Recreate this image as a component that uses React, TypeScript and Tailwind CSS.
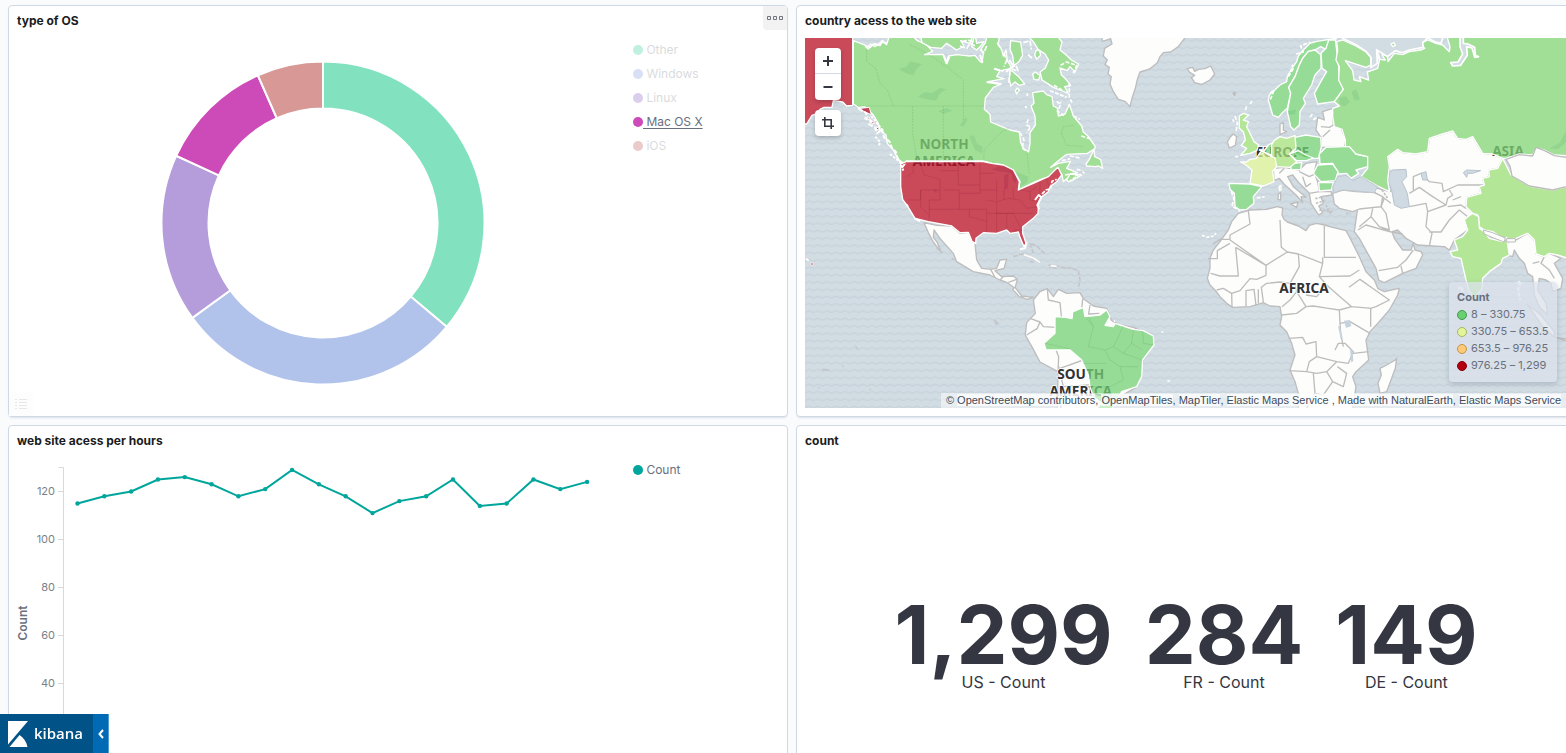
import React from "react";

const slices = [
  { name: "Other", from: 0, to: 130, color: "#82e2c0" },
  { name: "Windows", from: 130, to: 234, color: "#b1c2eb" },
  { name: "Linux", from: 234, to: 294.6, color: "#b59ddb" },
  { name: "Mac OS X", from: 294.6, to: 336.2, color: "#cc4bb8" },
  { name: "iOS", from: 336.2, to: 360, color: "#d89896" },
];

const hourly = [115, 118, 120, 125, 126, 123, 118, 121, 129, 123, 118, 111, 116, 118, 125, 114, 115, 125, 121, 124];

const metrics = [
  { value: "1,299", label: "US - Count" },
  { value: "284", label: "FR - Count" },
  { value: "149", label: "DE - Count" },
];

const ranges = [
  { label: "8 – 330.75", fill: "#69cf70", stroke: "#3f9c48" },
  { label: "330.75 – 653.5", fill: "#e3f49a", stroke: "#a5b763" },
  { label: "653.5 – 976.25", fill: "#fdcb77", stroke: "#c49246" },
  { label: "976.25 – 1,299", fill: "#b5000f", stroke: "#86000b" },
];

function polar(r: number, deg: number) {
  const a = ((deg - 90) * Math.PI) / 180;
  return `${(r * Math.cos(a)).toFixed(2)} ${(r * Math.sin(a)).toFixed(2)}`;
}

function arc(from: number, to: number) {
  const big = to - from > 180 ? 1 : 0;
  return `M${polar(161.5, from)}A161.5 161.5 0 ${big} 1 ${polar(161.5, to)}L${polar(114.5, to)}A114.5 114.5 0 ${big} 0 ${polar(114.5, from)}Z`;
}

function Panel({ title, children, menu }: { title: string; children: React.ReactNode; menu?: boolean }) {
  return (
    <section className="relative flex h-[412px] flex-col rounded border border-[#cfd9e6] bg-white px-2 pb-2 shadow-[0_2px_2px_-1px_rgba(152,162,179,0.3)]">
      <h2 className="mb-0.5 h-[30px] text-xs leading-[30px] font-bold text-[#1a1c21]">{title}</h2>
      {menu && (
        <button
          aria-label="Panel options"
          className="absolute top-0 right-0 flex h-6 w-6 items-center justify-center rounded-bl bg-[#f2f2f3]"
        >
          <svg width="16" height="4" viewBox="0 0 16 4" fill="none" stroke="#70747d" strokeWidth="1">
            <path d="M.5.5h3v3h-3zM6.5.5h3v3h-3zM12.5.5h3v3h-3z" />
          </svg>
        </button>
      )}
      {children}
    </section>
  );
}

function DonutPanel() {
  return (
    <Panel title="type of OS" menu>
      <div className="flex min-h-0 flex-1">
        <svg className="h-full min-w-0 flex-1" viewBox="-185 -185 370 370" role="img" aria-label="type of OS">
          {slices.map((s) => (
            <path key={s.name} d={arc(s.from, s.to)} fill={s.color} stroke="#fff" strokeWidth="2" />
          ))}
        </svg>
        <ul className="w-[150px] pl-1 text-xs leading-[23px]">
          {slices.map((s) => {
            const on = s.name === "Mac OS X";
            return (
              <li key={s.name} className="h-6">
                <button className="flex items-center text-[#69707d]">
                  <svg width="10" height="10" viewBox="0 0 10 10">
                    <circle cx="5" cy="5" r="5" fill={s.color} fillOpacity={on ? 1 : 0.5} />
                  </svg>
                  <span className={on ? "whitespace-pre underline underline-offset-2" : "whitespace-pre opacity-25"}>
                    {" " + s.name}
                  </span>
                </button>
              </li>
            );
          })}
        </ul>
      </div>
      <button aria-label="Toggle legend" className="absolute bottom-0 left-0 flex h-6 w-6 items-center justify-center rounded-tr bg-[#fdfdfd]">
        <svg width="12" height="10" viewBox="0 0 12 10" stroke="#e6e7e9" strokeWidth="1">
          <path d="M0 .5h2M4 .5h8M0 3.5h2M4 3.5h8M0 6.5h2M4 6.5h8M0 9.5h2M4 9.5h8" />
        </svg>
      </button>
    </Panel>
  );
}

function LinePanel() {
  const pts = hourly.map((v, i) => [60.5 + i * 26.82, 33.5 + (120 - v) * 2.4]);
  return (
    <Panel title="web site acess per hours">
      <div className="flex min-h-0 flex-1">
        <svg
          className="h-full min-w-0 flex-1 font-['Inter',sans-serif]"
          viewBox="0 0 612 370"
          preserveAspectRatio="xMinYMin meet"
          role="img"
          aria-label="Count per hour"
        >
          <path d="M41.500 9.500h5V346M41 33.500h5M41 81.500h5M41 129.500h5M41 177.500h5M41 225.500h5" fill="none" stroke="#d9d9d9" />
          {[120, 100, 80, 60, 40].map((v, i) => (
            <text key={v} x="38" y={37 + i * 48} textAnchor="end" fontSize="11" fill="#7b7f88">
              {v}
            </text>
          ))}
          <text transform="translate(10 165) rotate(-90)" textAnchor="middle" fontSize="12" fontWeight="600" fill="#69707d">
            Count
          </text>
          <polyline points={pts.map((p) => p.join(",")).join(" ")} fill="none" stroke="#00a69b" strokeWidth="2" />
          {pts.map((p, i) => (
            <circle key={i} cx={p[0]} cy={p[1]} r="2.2" fill="#00a69b" />
          ))}
        </svg>
        <ul className="w-[150px] pl-1 text-xs leading-[23px]">
          <li className="h-6">
            <button className="flex items-center text-[#69707d]">
              <svg width="10" height="10" viewBox="0 0 10 10">
                <circle cx="5" cy="5" r="5" fill="#00a69b" />
              </svg>
              <span className="whitespace-pre">{" Count"}</span>
            </button>
          </li>
        </ul>
      </div>
    </Panel>
  );
}

const LAND = { fill: "#fdfdfc", stroke: "#bdbdbd", strokeWidth: 4, strokeLinejoin: "round" as const };

// Drawn twice: once as plain land under the labels, once as the translucent data layer above them.
function CountedCountries({ plain }: { plain?: boolean }) {
  const f = (color: string) => (plain ? "#fdfdfc" : color);
  return (
    <g stroke={plain ? "none" : "#fff"} strokeWidth={4} strokeLinejoin="round" fillOpacity={plain ? 1 : 0.75}>
      <g fill={f("#81d474")}>
        <path d="M160 122L182 130L205 140L212 132L225 140L240 128L262 128L270 100H330L352 122L378 132L398 154L374 164L430 163L438 188L446 168L470 164L492 166L508 168L525 166L538 182L546 188L550 162L544 146L556 128L562 104L598 112L594 134L604 146L610 168L618 150L622 182L636 205L600 212L590 230L612 236L565 245L604 252L580 262L556 294L553 328L570 343L572 366L605 380L630 390L658 396L662 428L672 448L686 455L690 430L690 398L706 375L705 348L693 318L702 310L698 278L730 273L740 284L756 290L760 318L772 324L775 348L795 342L808 313L820 348L845 378L850 396L864 408L885 438V446L862 460L800 463L775 482L752 502L775 490L812 484L800 505L832 518L812 526L790 545L785 522L770 505L755 530L730 535L700 548L655 570L660 545L640 510L610 495L575 490L550 483H318L312 500L292 472L280 450L262 430L258 405L240 390L235 370L220 345L195 320L175 322L160 312Z" />
        <path d="M360 100L366 128L392 142L425 145L440 130L470 150L492 138L482 122L510 130L520 100Z" />
        <path d="M525 100L530 130L552 125L540 140L530 150L515 140L520 120Z" />
        <g transform="translate(480 108)">
          <path d="M150 102L160 108L178 124L194 144L178 148L165 138L152 150L148 128ZM152 14L182 18L188 58L176 78L162 88L158 60L150 40ZM228 44L238 42L242 58L230 70L224 56ZM166 164L172 156L178 162L170 174ZM218 114L226 108L240 118L236 132L222 130Z" />
          <path d="M198 -8L222 20L234 40L255 54L266 72L256 96L240 108L246 132L262 142L280 154L300 162L325 172L314 152L332 148L318 130L304 116L300 96L322 104L330 92L345 108L356 84L334 72L318 56L300 42L306 18L286 -8Z" />
        </g>
        <path d="M858 492L868 478L882 448L884 470L902 478L908 505L896 498L886 500L860 498ZM800 540L810 522L845 525L820 540L806 545Z" />
      </g>
      <g fill={f("#b80e24")}>
        <path d="M0 100H158V316L140 318L128 306L100 302L96 322L72 322L60 328L48 342L36 346L20 372H0Z" />
        <path d="M318 485H550L575 490L610 495L640 510L658 545L655 570L700 550L745 530L765 510L774 502L785 525L770 545L750 560L745 575L725 590L716 608L714 640L700 655L668 680L668 700L678 730L672 740L660 712L655 696L630 700L620 690L590 700L550 698L528 715L527 730L516 724L505 697L480 698L455 678L385 665L345 655L325 622L308 598L302 560V492Z" />
        <path d="M34 788l6 2l-2 6l-6 -2z" strokeWidth="2" />
        {!plain && <path d="M174 326L208 322L214 344L200 338ZM202 350l8 4l-4 6zM216 362l8 8l-8 2zM228 380l10 6l-8 4zM244 384l6 6l-8 2z" strokeWidth="3" />}
      </g>
      <g transform="translate(750 90)" fill={f("#74d074")}>
        <path d="M655 210L658 195L672 182L690 165L710 155L712 140L724 118L740 95L745 78L760 60L780 40L800 34L858 25L856 34L836 32L828 58L812 50L795 60L775 64L758 85L748 105L735 140L716 172L722 190L712 235L700 245L685 262L668 255Z" />
        <path d="M712 245L722 190L716 172L735 140L748 105L758 85L775 64L795 60L813 75V115L795 135L785 165L760 205L766 220L750 245L748 285L732 300L722 290Z" />
        <path d="M537 460L600 462L635 470L610 500L612 520L590 538L570 540L555 530L553 490L540 478Z" />
        <path d="M735 322L768 315L812 322L814 350L806 385L768 385L735 372Z" />
        <path d="M718 372L745 362L768 375L790 384L770 392L740 392ZM720 402L755 397L752 418L724 420ZM640 366L655 345L672 336L664 375Z" />
      </g>
      <g transform="translate(1518 90)" fill={f("#74d074")}>
        <path d="M45 70L60 55L68 30L88 30L92 60L98 110L100 150L112 178L85 215L35 222L25 190L50 145L62 125L48 115Z" />
        <path d="M40 372L60 352L115 350L130 348L150 372L185 380V410L150 420L158 430L135 445L122 430L98 432L80 400L42 402Z" />
        <path d="M35 405L80 402L96 425L88 452L45 455L22 430ZM38 458L82 458L76 480L40 483Z" />
      </g>
      <path
        transform="translate(1518 90)"
        fill={f("#81d474")}
        d="M80 235L100 228L85 215L112 178L98 150L100 110L90 90L95 60L92 35L110 30L150 48L180 66L194 82L194 105L180 112L118 92L140 122L144 150L165 155L160 140L188 150L184 126L215 115L220 92L214 62L222 88L238 90L228 75L244 74L246 95L265 70L290 74L310 65L345 60L356 55L345 40L365 30L390 40L410 45L430 65L432 50L420 10H800V378L745 375L715 360L690 355L680 375L640 372L600 385L590 385L560 372L530 370L500 320L480 328L455 325L440 303L400 315L370 325L365 365L330 372L290 368L275 358L245 380L250 410L245 450L250 485L215 468L165 440L185 415V380L150 372L130 350L118 350V330L108 298L85 290L80 260Z"
      />
      <g transform="translate(750 600)" fill={f("#74d074")}>
        <path d="M15 350L48 352L66 356L68 336L100 322L105 350L150 345L170 330L180 350L165 376L190 380L195 370L220 378L250 388L280 392L310 408L312 435L278 480L275 530L260 560L215 575L200 600L180 640H125L155 610L130 590L120 560L115 525L95 480L60 450H-12L-18 430L15 400Z" />
      </g>
      <g fill={f("#99dd75")}>
        <path transform="translate(750 90)" d="M568 258L580 250L596 255L580 270L595 275L590 290L605 320L612 335L626 345L620 362L600 370L572 376L590 355L574 346L586 330L580 305L568 295Z" />
        <path transform="translate(1518 90)" d="M590 385L615 435L670 468L740 480L800 465V690L755 675L730 670L715 680L690 672L685 630L665 610L630 625L600 632L560 605L535 600L520 590L515 555L500 550L480 530L482 502L525 490L520 470L535 465L530 445L550 440L548 420L575 415Z" />
        <path transform="translate(1518 600)" d="M485 50L500 40L518 50L520 85L535 95L550 115L590 125L602 112L606 140L610 165L590 175L585 190L550 215L530 235L528 265L510 290H502L490 275L480 240L465 175L440 170L432 155L455 150L445 120L470 110L485 90L475 60Z" />
      </g>
      <path transform="translate(750 90)" fill={f("#a6e07c")} d="M665 345L672 332L690 320L710 325L735 316L738 355L718 372L740 395L720 412L680 410L665 385Z" />
      <path transform="translate(750 90)" fill={f("#d6ee92")} d="M572 396L590 396L600 388L618 386L635 362L675 385L680 410L668 424L672 455L640 468L600 460L606 420L592 408ZM687 470l6-4v14l-4 2z" />
    </g>
  );
}

function WorldMap() {
  return (
    <svg className="block h-full w-full" viewBox="15 114 2289 1110" preserveAspectRatio="xMinYMid slice" role="img" aria-label="World map">
      <defs>
        <pattern id="waves" width="27" height="22" patternUnits="userSpaceOnUse">
          <rect width="27" height="22" fill="#d2dce3" />
          <path d="M0 9C6 9 8 14 13.500 14S21 9 27 9" fill="none" stroke="#c8d3db" strokeWidth="4" />
        </pattern>
      </defs>
      <rect x="0" y="100" width="2320" height="1140" fill="url(#waves)" />

      {/* Greenland, Iceland, Ireland and Denmark */}
      <g transform="translate(750 90)" {...LAND}>
        <path d="M150 10L158 34L182 26L186 42L164 55L160 78L172 90L165 104L178 112L174 132L184 140L180 162L190 185L205 208L225 214L240 230L246 205L256 175L262 148L270 126L290 120L300 116L322 98L330 80L340 68L362 66L385 50L415 10Z" />
        <path d="M412 116L428 112L434 124L445 118L465 116L482 108L494 132L480 150L456 163L434 158L424 142L434 136L418 126Z" />
        <path d="M540 322L550 312L560 320L556 346L538 354L532 336Z" />
        <path d="M549 190L556 186L554 196Z" />
        <path d="M690 282L700 278L700 300L710 305L690 314Z" />
      </g>

      {/* Africa */}
      <g transform="translate(750 600)" {...LAND}>
        <path d="M565 40L600 30L650 28L682 20L698 24L696 45L702 58L712 66L745 78L768 92L778 76L800 70L823 75L848 82L888 92L898 110L928 170L948 215L973 240L984 266L1003 275L1048 265L1043 285L1018 330L983 370L960 395L948 420L956 480L918 515L908 530L918 560L906 640H746L745 580L735 545L720 510L735 465L725 430L710 395L690 375L695 350L690 320L660 318L640 308L600 320L548 322L530 310L510 290L495 270L480 255L472 235L480 205L480 175L490 150L510 125L535 90L545 65Z" />
        <path fill="none" strokeWidth="4" d="M595 32L600 72L540 105V120L648 196L712 156L694 142L690 60M488 132L512 118H540M474 176H502V152L540 130M557 142L648 196V226L620 238L600 236L570 272L545 280L546 320M557 142L565 228H510L482 220M712 156L745 162L748 200L720 250L690 246L650 250L634 262L640 306M745 162L818 190V172M823 78V172H918M818 190L808 230L830 255L800 290L768 285M808 230L900 228L928 210M588 320V272L612 268L618 316M625 310V268M500 270L520 265L545 280M696 320L720 300L740 275L768 320L740 340L695 345M740 275L735 250M768 320L790 318L835 325L868 330L905 320L965 325M830 255L870 290L905 320M897 262L930 238L975 270L1018 300L978 320L962 325V380M868 330L870 370L900 365L960 400M716 415L758 412L768 432L798 425L800 470L778 485L770 515L718 512M800 470L860 485L895 490L910 455L885 430L865 430L855 450M870 370L872 400L880 440M910 460L956 455M770 515L800 520L830 515L860 485M830 515L848 545L880 560L890 520L862 500M790 520L795 580L770 624M848 545L820 585L795 580" />
        <path d="M1036 480L1040 475L1036 505L1010 575L990 580L984 550L994 525L990 505L1010 495Z" />
        <path fill="#c6d3dd" stroke="none" d="M882 362l18 -2l4 18l-16 6zM864 378l6 2l8 34l-6 2zM900 450l8 2l2 30l-6 6z" />
      </g>

      {/* Asia, the Middle East and southern Europe */}
      <g transform="translate(1518 90)" {...LAND}>
        <path d="M245 380L275 358L290 368L330 372L365 365L370 325L400 315L440 303L455 325L480 328L500 320L530 370L560 372L590 385L575 415L548 420L550 440L530 445L535 465L520 470L525 490L482 502L480 530L500 550L485 600L445 630L430 660L415 650L380 648L335 645L300 625L275 600L258 605L265 625L290 660L315 660L322 640L327 660L345 665L350 675L330 715L290 730L235 758L218 750L210 715L185 670L160 625L145 605L150 570L155 535L225 530L235 505L210 490L180 465L250 485L260 482Z" />
        <path d="M80 490L110 480L150 485L205 488L230 500L225 530L160 537L140 545L100 535L85 522Z" />
        <path d="M80 235L50 245L55 270L35 262L30 300L45 322V352L115 352L120 330L105 295L82 285Z" />
        <path d="M-98 415L-65 412L-20 420L0 400L32 395L25 428L35 455L40 485L75 485L78 495L45 500L52 520L38 528L50 548L38 555L15 520L10 490L-20 460L-40 435L-55 440L-38 470L0 502L-15 500L-10 518L-30 495L-66 462L-80 445L-96 452Z" />
        <path d="M-46 522L-24 516L-28 532ZM-83 492L-76 487V510L-84 508Z" />
        <path d="M605 635L630 630L665 610L688 635L690 672L715 680L730 670L765 685L745 700L770 745L765 775L740 785L735 760L720 750L700 745L695 780L720 820L725 855L700 830L685 795L680 740L665 730L655 700L640 685L625 660L620 680L602 675Z" />
        <path d="M665 825L700 850L745 905V922L710 890ZM748 922L800 930V940Z" />
        <path fill="none" strokeWidth="4" d="M45 290L70 292L82 285M50 320L72 300M-20 425L10 440L30 430M-10 440L0 470L15 460M10 490L40 485M-80 430L-65 415" />
        <path fill="none" strokeWidth="4" d="M225 530L240 550L250 600L220 590L195 560L200 535M160 590L195 560M220 590L255 606M235 505L255 520M310 530L360 520L365 545L360 590L378 610L370 648M322 480V440L345 430L370 455L408 460L412 485L455 465L535 465M310 490L340 472L380 500L420 525L365 545M370 606H405L430 570L460 540L485 560M420 525L425 505L440 495L430 480M425 530L465 525L480 535M465 500L440 510M156 600L180 585L250 605L290 612M218 722L275 712L300 690L322 660M290 730L285 708M715 680L705 700L730 720L745 745M680 700L700 695" />
      </g>
      <g transform="translate(1518 90)" fill="#d0dae2" stroke="#b8c3cd" strokeWidth="3" strokeLinejoin="round">
        <path d="M250 430L258 420L300 418L302 440L288 455L304 490L310 530L285 535L265 525L258 485L248 455Z" />
        <path d="M472 428L482 420L524 422L500 430L485 430L482 442ZM345 430L360 425L364 450L350 450Z" />
      </g>

      {/* Mexico, Central America and South America */}
      <g transform="translate(0 600)" {...LAND}>
        <path d="M372 68L410 76L455 78L480 100L505 97L525 130L530 180L545 205L572 208L590 205L600 180L620 178L612 205L585 212L605 230L640 228L652 238L645 265L620 247L600 240L570 225L520 215L470 185L460 160L420 115L402 90L400 112L412 128L424 158L400 126L386 100Z" />
        <path d="M645 262L665 288L700 292L682 298L658 290L638 268Z" />
        <path d="M700 300L720 275L742 266L760 290L775 268L800 280L840 278L850 296L880 318L920 325L935 362L960 375L1000 382L1060 408L1062 432L1030 480L1020 535L1008 562L960 590L930 640H772L774 515L720 486L700 448L676 405L680 368L706 340Z" />
        <path fill="none" strokeWidth="4" d="M742 266L745 300L780 308L784 348L768 382L730 380L720 366L692 356M720 366L712 385L680 405M768 450L776 470L774 515M848 296L845 330M870 315L866 342L898 340M776 500L790 560L780 640M850 480L780 505M790 560L868 555M572 208L585 232M610 230L600 240M625 247L650 238" />
        <path fill="none" strokeWidth="5" stroke="#c4c7ca" d="M640 170L668 162L700 175L722 188M745 195L775 198L765 204L748 202M700 160L690 130L710 138L735 162M690 185L702 186M782 202L810 204L835 212L840 240L835 262M410 145L428 158M455 175L462 180" strokeDasharray="14 4" />
        <path fill="#c4c7ca" stroke="none" d="M580 358l10 4l8 10l-12 2zM162 432l6 6l8 10l-4 2zM64 506h8l14 2l2 6l-20 -2zM126 496h5v4h-5zM208 566h5v4h-5zM54 562h5v3h-5zM36 400h5v3h-5z" />
        <path fill="none" stroke="#fdfdfc" strokeWidth="5" d="M672 164L700 174L720 187M752 197L770 199" />
      </g>

      <CountedCountries plain />

      {/* Lakes */}
      <g fill="#c6d3dd">
        <path d="M296 206L320 200L330 184L366 192L350 206L340 226L318 220ZM352 290L375 276L395 280L420 264L440 268L420 280L408 302L380 298ZM414 334L440 324L458 332L430 342ZM480 376L498 350L502 360L490 380ZM508 410L522 405L530 430L548 440L546 460L525 450ZM640 515L660 520L685 530L682 548L660 560Z" />
        <path d="M575 508L600 498L640 508L645 525L625 518L595 514ZM612 525L626 520L624 565L612 570ZM634 518L655 530L646 550L638 540ZM654 568L690 555L680 562ZM398 570L410 568V580Z" />
        <path transform="translate(1518 90)" d="M98 205L120 198L132 215L115 230L102 222ZM136 185L150 178L162 208L146 212ZM730 355L760 340L782 300V335L755 358Z" />
        <path transform="translate(750 90)" d="M712 245L738 238L735 252L714 255Z" />
      </g>

      {/* Continent labels */}
      <g fontFamily="'Noto Sans', sans-serif" fontWeight="700" fontSize="41" fill="#303236" stroke="#fff" strokeWidth="5" paintOrder="stroke" textAnchor="middle" strokeLinejoin="round">
        <text x="432" y="446">NORTH</text>
        <text x="432" y="497">AMERICA</text>
        <text x="1447" y="471">EUROPE</text>
        <text x="2124" y="468">ASIA</text>
        <text x="1512" y="879">AFRICA</text>
        <text x="842" y="1137">SOUTH</text>
        <text x="842" y="1187">AMERICA</text>
      </g>

      <CountedCountries />

      <g transform="translate(1518 90)">
        <path {...LAND} d="M600 388L640 374L680 378L690 352L716 362L745 377L800 385V465L740 480L670 468L618 438L612 408Z" />
        <path fill="#fdfdfc" stroke="#bdbdbd" strokeWidth="3" d="M532 600L560 608L598 624L594 636L558 622L535 612ZM602 626H628V636H602Z" />
        <path fill="#d2dce3" stroke="#fff" strokeWidth="5" d="M100 10H210L350 10H415L405 40L388 36L365 24L350 38L352 52L310 60L288 68L268 62L244 80L230 70L212 60L214 100L195 112V82L180 64L150 44L112 26Z" />
        <path fill="#a0de97" stroke="#fff" strokeWidth="4" d="M255 42L264 38L268 46L260 50Z" />
        <path fill="#d2dce3" stroke="#fff" strokeWidth="5" strokeLinejoin="round" d="M462 10V50L470 72L456 96L434 98L440 108L464 106L484 76L482 50L498 54L506 82L518 80L508 76L506 52L486 42L472 40V10Z" />
        <path fill="#d0dae2" stroke="#c0c8cf" strokeWidth="3" d="M80 470L95 440L120 436L140 452L165 440L215 470L205 488L150 483L110 480L84 488Z" />
      </g>

      {/* Inner borders of the counted countries */}
      <g fill="none" stroke="#2e6e3a" strokeOpacity="0.22" strokeWidth="2" strokeDasharray="6 3">
        <path d="M200 140V184L228 206L240 250L262 270L280 318M160 318H552M330 134L380 160L440 200L490 240V318M338 318V400L352 483M430 318V483M490 318V360M552 483V450L600 400L630 380M680 452L688 520M784 400L790 380L820 376M784 400L800 436L850 440" />
      </g>
      <g fill="none" stroke="#7e1a2b" strokeOpacity="0.26" strokeWidth="2">
        <path d="M340 485V518L318 530M360 485L372 525L420 538V570V570H362V600H325M420 512H475V485M475 512V555H540M420 570V600H388V655M362 570V622L388 645M430 570H478V628H388M540 485V580H478M540 570H590M590 540V600M508 628V650L560 664V695M478 628H560V664M560 600L590 605V640H640M590 605L625 595L660 600M612 570V600M640 565V595M660 570L690 575L710 560M690 575V600L716 605M590 640V695M620 640V690M640 640L660 680M660 600L680 625L714 620M560 640H700M540 520H585M720 545V580M740 535L748 565M640 690H668" />
      </g>
      <g transform="translate(750 600)" fill="none" stroke="#3c8c47" strokeOpacity="0.25" strokeWidth="2">
        <path d="M-15 430L60 446M115 350L130 380L115 440L165 450L180 480M105 350L130 380M220 378L205 410L190 440L165 450M190 440L220 460L275 480M100 490H170M180 480L210 500H265M210 500L220 540L180 560H120M250 390L245 430L278 450M278 395L280 430L310 435M245 430L220 460" />
      </g>

      {/* Island fringes along the coasts */}
      <g fill="none" stroke="#fff" strokeWidth="6" strokeLinejoin="round">
        <path d="M176 326L200 340L196 356L214 362L206 372L224 382L232 400L246 388L252 412L268 424L276 444L288 456L294 480L314 492L304 506" strokeDasharray="14 5" />
        <path d="M214 348L236 376L250 396M226 410L240 426L236 440M270 462L300 486L310 512" strokeDasharray="8 4" />
        <path d="M196 138L204 146L222 132L240 136L246 122L262 134M430 165L440 190L448 170M540 164L548 188M600 212L582 206M618 216L640 198L628 180M560 246L600 252" />
      </g>
      <g transform="translate(480 108)" fill="none" stroke="#fff" strokeWidth="5" strokeLinejoin="round">
        <path d="M0 30L20 38L30 22L45 30M5 18L24 12L40 18M60 40L72 50L80 30M112 20L124 40M132 50L140 74L132 92M150 96L168 88L174 104L156 100M104 98L130 106M190 20L210 14L214 40M204 56L216 66M146 140L150 110" strokeDasharray="16 5" />
        <path d="M196 210l4 6M202 172v8M204 250L200 268L212 272L200 290M180 290L192 312L186 336L206 348M290 196L302 206L292 226L312 238M300 200h4M282 148L312 166M302 88L320 78L350 88L340 112M328 140V184L336 200M340 240L360 250M364 300L390 308M306 374L330 368M330 360L360 366M350 400L368 404" strokeDasharray="12 5" />
        <path d="M246 474L258 462L272 458L276 436L290 430" strokeDasharray="12 4" />
      </g>
      <g fill="none" stroke="#fff" strokeWidth="6" strokeLinejoin="round">
        <path d="M705 600L716 585L724 592L712 615L718 628M680 725L675 745L660 748M345 655L360 664M324 620L318 612" />
      </g>
      <g transform="translate(750 90)" fill="none" stroke="#fff" strokeWidth="5" strokeLinejoin="round">
        <path d="M738 72L760 66L752 48L780 36M660 190L672 180L660 212M715 140L730 116L726 104M586 240L590 228M600 222L606 214M555 258L562 280L558 306M552 276L548 268M544 484L552 506L546 528L570 544M620 504L644 500M790 270L800 262M780 262L790 248" strokeDasharray="12 5" />
        <path d="M45 435L70 430L84 438L60 452M0 182L50 202M98 426l6 4M556 380l8 0" strokeDasharray="12 4" />
      </g>
      <g transform="translate(750 600)" fill="none" stroke="#fff" strokeWidth="5">
        <path d="M456 106L470 112L492 108L498 100M166 376L195 362M334 396h6M352 543h8" strokeDasharray="9 5" />
      </g>
      <path d="M18 776L26 782" stroke="#fff" strokeWidth="5" />
      <path transform="translate(1518 600)" d="M632 250L646 244L636 268L642 300M456 266L470 262L468 275" fill="none" stroke="#fdfdfc" strokeWidth="7" strokeDasharray="12 5" />
      <path transform="translate(1518 90)" d="M30 520L60 510M40 540L80 545M60 525L75 555M28 506L52 500M120 550H134M228 480L245 505" fill="none" stroke="#c0c2c4" strokeWidth="5" strokeDasharray="7 4" />
    </svg>
  );
}

const credits = ["OpenStreetMap contributors", "OpenMapTiles", "MapTiler", "Elastic Maps Service ", "Made with NaturalEarth", "Elastic Maps Service"];

function MapPanel() {
  return (
    <Panel title="country acess to the web site">
      <div className="relative min-h-0 flex-1 overflow-hidden">
        <WorldMap />
        <div className="absolute top-2.5 left-2.5 flex flex-col gap-2.5 text-[#343741]">
          <div className="flex flex-col overflow-hidden rounded bg-white shadow-[0_2px_4px_rgba(0,0,0,0.2)]">
            <button aria-label="Zoom in" className="flex h-[26px] w-[26px] items-center justify-center border-b border-[#d3dae6]">
              <svg width="10" height="10" viewBox="0 0 10 10" stroke="currentColor" strokeWidth="2">
                <path d="M5 0v10M0 5h10" />
              </svg>
            </button>
            <button aria-label="Zoom out" className="flex h-[26px] w-[26px] items-center justify-center">
              <svg width="10" height="10" viewBox="0 0 10 10" stroke="currentColor" strokeWidth="2">
                <path d="M0.500 5h9" />
              </svg>
            </button>
          </div>
          <button aria-label="Fit data bounds" className="flex h-[26px] w-[26px] items-center justify-center rounded bg-white shadow-[0_2px_4px_rgba(0,0,0,0.2)]">
            <svg width="12" height="12" viewBox="0 0 12 12" fill="none" stroke="currentColor" strokeWidth="1.600">
              <path d="M2.800 0v9.200H12M0 2.800h9.200V12" />
            </svg>
          </button>
        </div>
        <div className="absolute right-2.5 bottom-[26px] w-[108px] rounded bg-[#dbe2ec]/75 px-2 pt-[7px] pb-2 text-[11px] leading-[17px] text-[#69707d] shadow-[0_2px_5px_rgba(100,115,140,0.35)]">
          <div className="font-bold">Count</div>
          <ul>
            {ranges.map((r) => (
              <li key={r.label} className="flex items-center gap-1 whitespace-nowrap">
                <svg className="shrink-0" width="10" height="10" viewBox="0 0 10 10">
                  <circle cx="5" cy="5" r="4.500" fill={r.fill} stroke={r.stroke} />
                </svg>
                {r.label}
              </li>
            ))}
          </ul>
        </div>
        <div className="absolute right-0 bottom-0 bg-white/50 pr-1.5 pb-px pl-[5px] font-['Liberation_Sans',sans-serif] text-[11px] leading-[14px] whitespace-pre text-[#404a59]">
          {"© "}
          {credits.map((c, i) => (
            <React.Fragment key={i}>
              {i > 0 && ", "}
              <a href="#" className="bg-white/70">
                {c}
              </a>
            </React.Fragment>
          ))}
        </div>
      </div>
    </Panel>
  );
}

function MetricPanel() {
  return (
    <Panel title="count">
      <div className="flex min-h-0 flex-1 items-center justify-center">
        {metrics.map((m) => (
          <div key={m.label} className="px-4 pt-6 pb-4 text-center text-[#343741]">
            <div className="text-[81px] leading-[70px] font-bold">{m.value}</div>
            <div className="text-base leading-6">{m.label}</div>
          </div>
        ))}
      </div>
    </Panel>
  );
}

export default function App() {
  return (
    <div className="h-screen overflow-hidden bg-[#fafbfd] font-['Inter',sans-serif]">
      <main className="-mr-2.5 ml-2 grid grid-cols-2 gap-2 pt-[5px]">
        <DonutPanel />
        <MapPanel />
        <LinePanel />
        <MetricPanel />
      </main>
      <footer className="fixed bottom-0 left-0 flex h-[39px] bg-[#005287] text-white">
        <a href="#" className="flex items-center gap-1.5 pr-2.5 pl-2 font-['Open_Sans',sans-serif] text-[15px] font-semibold">
          <svg width="20" height="26" viewBox="0 0 20 26" fill="#fff">
            <path d="M0 0h20L0 23.500z" />
            <path d="M1.500 26L11.500 14C15.500 16.500 18.500 20.500 19.500 26z" />
          </svg>
          kibana
        </a>
        <button aria-label="Collapse" className="flex w-4 items-center justify-center border-r border-[#4c9bd3] bg-[#006bb4]">
          <svg width="6" height="10" viewBox="0 0 6 10" fill="none" stroke="#fff" strokeWidth="2">
            <path d="M5 1L1.500 5L5 9" />
          </svg>
        </button>
      </footer>
    </div>
  );
}
